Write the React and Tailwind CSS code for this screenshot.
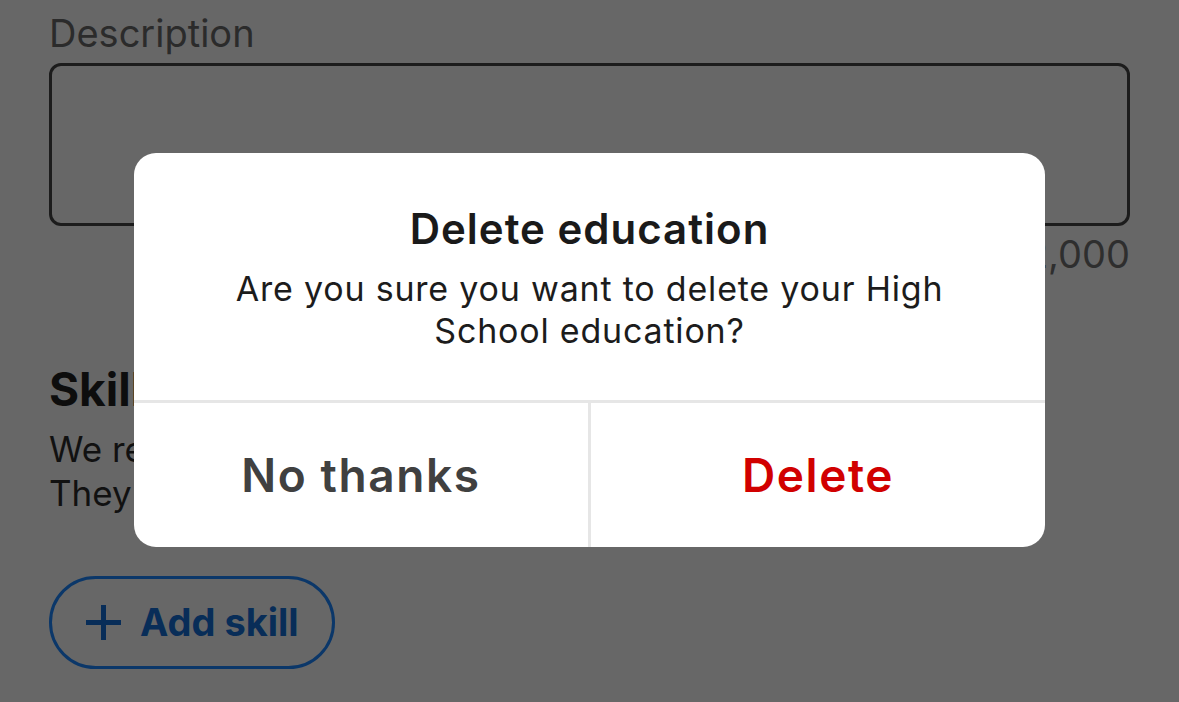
import React from "react";

export default function App() {
  const font = { fontFamily: "Inter, 'Noto Sans', 'Liberation Sans', sans-serif" };
  return (
    <div className="relative w-[1179px] h-[702px] overflow-hidden bg-[#676767]" style={font}>
      <div className="flex flex-col px-[49px] pt-[12px]">
        <div className="text-[38px] leading-[42px] text-[#2b2b2b]">Description</div>
        <div className="mt-[9px] h-[163px] rounded-[12px] border-[3px] border-[#1c1c1c]"></div>
        <div className="mt-[7px] text-right text-[38px] leading-[42px] text-[#2e2e2e]">0/2,000</div>
        <div className="mt-[88px] text-[46px] leading-[52px] font-bold text-[#0d0d0d]">Skills</div>
        <div className="mt-[12px] text-[35px] leading-[44px] text-[#111]">
          <div>We recommend adding your top 5 used in this role.</div>
          <div>They also appear in your Skills section.</div>
        </div>
        <div className="mt-[61px] flex">
          <div className="flex h-[93px] w-[286px] items-center gap-[18px] rounded-full border-[3px] border-[#0b3769] pl-[33px]">
            <svg width="37" height="37" viewBox="0 0 37 37">
              <path d="M18.5 1v35M1 18.5h35" stroke="#082d58" strokeWidth="5" fill="none" />
            </svg>
            <span className="text-[38px] font-bold text-[#082d58]">Add skill</span>
          </div>
        </div>
      </div>

      <div className="absolute left-[134px] top-[153px] flex h-[394px] w-[911px] flex-col overflow-hidden rounded-[22px] bg-white">
        <div className="flex flex-1 flex-col items-center pt-[52px] text-center">
          <div className="text-[42px] leading-[48px] font-semibold tracking-[1px] text-[#1a1a1a]">Delete education</div>
          <div className="mt-[15px] w-[760px] text-[34px] leading-[42px] tracking-[0.8px] text-[#1c1c1c]">
            Are you sure you want to delete your High School education?
          </div>
        </div>
        <div className="h-[3px] bg-[#e6e6e6]"></div>
        <div className="flex h-[144px]">
          <div className="flex flex-1 items-center justify-center text-[46px] font-semibold tracking-[1.6px] text-[#404040]">No thanks</div>
          <div className="w-[3px] bg-[#e6e6e6]"></div>
          <div className="flex flex-1 items-center justify-center text-[46px] font-semibold tracking-[1.6px] text-[#d10000]">Delete</div>
        </div>
      </div>
    </div>
  );
}
